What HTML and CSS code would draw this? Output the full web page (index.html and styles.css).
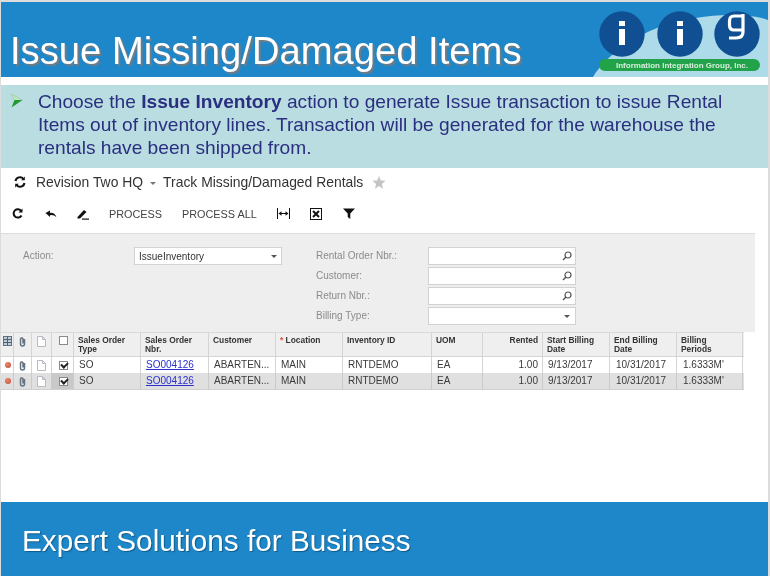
FILE: index.html
```html
<!DOCTYPE html>
<html lang="en">
<head>
<meta charset="utf-8">
<title>Issue Missing/Damaged Items</title>
<link rel="stylesheet" href="styles.css">
</head>
<body>
<div class="slide">
  <header class="banner">
    <h1 class="title">Issue Missing/Damaged Items</h1>
    <svg class="logo" width="210" height="75" viewBox="0 0 210 75">
      <path d="M35 75 C50 50 85 30 105 24 C125 17 150 13 172 13 C190 13 202 15 210 18 L210 75 Z" fill="#aedbe9"/>
      <circle cx="64" cy="32" r="22.700" fill="#0f4f92"/>
      <circle cx="122" cy="32" r="22.700" fill="#0f4f92"/>
      <circle cx="179" cy="32" r="22.700" fill="#0f4f92"/>
      <rect x="61" y="19" width="6" height="5" fill="#fff"/>
      <rect x="61" y="27" width="6" height="16" fill="#fff"/>
      <rect x="119" y="19" width="6" height="5" fill="#fff"/>
      <rect x="119" y="27" width="6" height="16" fill="#fff"/>
      <path d="M185 12 V30 Q185 36 178 36 H171 M185 14 H176 Q171.500 14 171.500 19 V23 Q171.500 28 176 28 H185" fill="none" stroke="#fff" stroke-width="3.200"/>
      <rect x="41" y="57" width="161" height="12" rx="6" fill="#22a34a"/>
      <text x="124" y="66" class="logo-text" text-anchor="middle">Information Integration Group, Inc.</text>
    </svg>
  </header>
  <section class="intro">
    <svg class="arrow" width="13" height="15" viewBox="0 0 13 15">
      <path d="M0.500 0.500 L12.500 7 L1.500 14.500 L4.500 7 Z" fill="#1f9a2e"/>
      <path d="M0.500 0.500 L12.500 7 L4.500 7 Z" fill="#bfe3c4"/>
    </svg>
    <p class="intro-text">Choose the <b>Issue Inventory</b> action to generate Issue transaction to issue Rental Items out of inventory lines. Transaction will be generated for the warehouse the rentals have been shipped from.</p>
  </section>
  <div class="app">
    <div class="crumbs">
      <svg class="ic refresh-top" width="12" height="12" viewBox="0 0 12 12"><path d="M1.500 5 A4.500 4.500 0 0 1 9.500 3 M10.500 7 A4.500 4.500 0 0 1 2.500 9" fill="none" stroke="#111" stroke-width="2"/><path d="M10.800 0.500 V4.200 H7.200 Z M1.200 11.500 V7.800 H4.800 Z" fill="#111"/></svg>
      <span class="crumb">Revision Two HQ</span>
      <span class="caret small"></span>
      <span class="crumb">Track Missing/Damaged Rentals</span>
      <svg class="star" width="14" height="13" viewBox="0 0 14 13"><path d="M7 0 L8.800 4.500 L13.600 4.800 L9.900 7.900 L11.100 12.700 L7 10 L2.900 12.700 L4.100 7.900 L0.400 4.800 L5.200 4.500 Z" fill="#c4c4c4"/></svg>
    </div>
    <div class="toolbar">
      <svg class="tool t-refresh" width="11" height="11" viewBox="0 0 11 11"><path d="M9.300 3 A4.200 4.200 0 1 0 9.500 7.500" fill="none" stroke="#111" stroke-width="2"/><path d="M10.500 0.500 V4.500 H6.500 Z" fill="#111"/></svg>
      <svg class="tool t-undo" width="12" height="8" viewBox="0 0 12 8"><path d="M3 3.500 C6 2 10 2.500 11.500 7.500 C9 4.500 6 4.700 4 5.500 Z" fill="#111"/><path d="M0.500 3 L5 0.500 L5 7 Z" fill="#111"/></svg>
      <svg class="tool t-edit" width="12" height="12" viewBox="0 0 12 12"><path d="M0.500 9 L7 2 L9.500 4 L3 10.500 L0.500 10.500 Z" fill="#111"/><rect x="5" y="10.500" width="7" height="1.200" fill="#111"/></svg>
      <span class="action">PROCESS</span>
      <span class="action">PROCESS ALL</span>
      <svg class="tool t-fit" width="13" height="11" viewBox="0 0 13 11"><path d="M0.500 0 V11 M12.500 0 V11 M2 5.500 H11" stroke="#111" fill="none"/><path d="M1.500 5.500 L4.500 3.200 V7.800 Z M11.500 5.500 L8.500 3.200 V7.800 Z" fill="#111"/></svg>
      <svg class="tool t-excel" width="12" height="12" viewBox="0 0 12 12"><rect x="0.500" y="0.500" width="11" height="11" fill="#fff" stroke="#111"/><path d="M3 3 L9 9 M9 3 L3 9" stroke="#111" stroke-width="2"/></svg>
      <svg class="tool t-filter" width="12" height="11" viewBox="0 0 12 11"><path d="M0 0.500 H12 L7.300 5.500 V11 L4.700 9 V5.500 Z" fill="#111"/></svg>
    </div>
    <div class="form">
      <div class="col-left">
        <label class="label l-action">Action:</label>
        <div class="field f-action"><span>IssueInventory</span><span class="caret"></span></div>
      </div>
      <div class="col-right">
        <label class="label">Rental Order Nbr.:</label>
        <div class="field"><svg class="search" width="10" height="10" viewBox="0 0 10 10"><circle cx="6" cy="4" r="3" fill="none" stroke="#555" stroke-width="1.200"/><path d="M4 6 L1 9" stroke="#555" stroke-width="1.500"/></svg></div>
        <label class="label">Customer:</label>
        <div class="field"><svg class="search" width="10" height="10" viewBox="0 0 10 10"><circle cx="6" cy="4" r="3" fill="none" stroke="#555" stroke-width="1.200"/><path d="M4 6 L1 9" stroke="#555" stroke-width="1.500"/></svg></div>
        <label class="label">Return Nbr.:</label>
        <div class="field"><svg class="search" width="10" height="10" viewBox="0 0 10 10"><circle cx="6" cy="4" r="3" fill="none" stroke="#555" stroke-width="1.200"/><path d="M4 6 L1 9" stroke="#555" stroke-width="1.500"/></svg></div>
        <label class="label">Billing Type:</label>
        <div class="field"><span class="caret"></span></div>
      </div>
    </div>
    <div class="grid">
      <div class="row head">
        <div class="c ico"><svg width="9" height="10" viewBox="0 0 9 10"><rect x="0.500" y="0.500" width="8" height="9" fill="#c3ccd6" stroke="#5d7188"/><path d="M0.500 3.500 H8.500 M0.500 6.500 H8.500 M4.500 0.500 V9.500" stroke="#4c6076"/></svg></div>
        <div class="c ico"><svg class="clip" width="7" height="11" viewBox="0 0 7 11"><path d="M5.500 3 V8 A2 2 0 0 1 1.500 8 V3 A1.300 1.300 0 0 1 4 3 V7.500" fill="none" stroke="#66747f" stroke-width="1.500"/></svg></div>
        <div class="c ico"><svg class="doc" width="9" height="11" viewBox="0 0 9 11"><path d="M0.500 0.500 H5.500 L8.500 3.500 V10.500 H0.500 Z M5.500 0.500 V3.500 H8.500" fill="#fff" stroke="#b4bbc2"/></svg></div>
        <div class="c ico"><span class="check"></span></div>
        <div class="c th">Sales Order Type</div>
        <div class="c th">Sales Order Nbr.</div>
        <div class="c th">Customer</div>
        <div class="c th"><span class="req">*</span> Location</div>
        <div class="c th">Inventory ID</div>
        <div class="c th">UOM</div>
        <div class="c th right">Rented</div>
        <div class="c th">Start Billing Date</div>
        <div class="c th">End Billing Date</div>
        <div class="c th">Billing Periods</div>
      </div>
      <div class="row">
        <div class="c ico"><span class="dot"></span></div>
        <div class="c ico"><svg class="clip" width="7" height="11" viewBox="0 0 7 11"><path d="M5.500 3 V8 A2 2 0 0 1 1.500 8 V3 A1.300 1.300 0 0 1 4 3 V7.500" fill="none" stroke="#66747f" stroke-width="1.500"/></svg></div>
        <div class="c ico"><svg class="doc" width="9" height="11" viewBox="0 0 9 11"><path d="M0.500 0.500 H5.500 L8.500 3.500 V10.500 H0.500 Z M5.500 0.500 V3.500 H8.500" fill="#fff" stroke="#b4bbc2"/></svg></div>
        <div class="c ico"><span class="check on"></span></div>
        <div class="c">SO</div>
        <div class="c"><a class="link" href="#">SO004126</a></div>
        <div class="c">ABARTEN...</div>
        <div class="c">MAIN</div>
        <div class="c">RNTDEMO</div>
        <div class="c">EA</div>
        <div class="c right">1.00</div>
        <div class="c">9/13/2017</div>
        <div class="c wide">10/31/2017</div>
        <div class="c wide">1.6333M'</div>
      </div>
      <div class="row alt">
        <div class="c ico"><span class="dot"></span></div>
        <div class="c ico"><svg class="clip" width="7" height="11" viewBox="0 0 7 11"><path d="M5.500 3 V8 A2 2 0 0 1 1.500 8 V3 A1.300 1.300 0 0 1 4 3 V7.500" fill="none" stroke="#66747f" stroke-width="1.500"/></svg></div>
        <div class="c ico"><svg class="doc" width="9" height="11" viewBox="0 0 9 11"><path d="M0.500 0.500 H5.500 L8.500 3.500 V10.500 H0.500 Z M5.500 0.500 V3.500 H8.500" fill="#fff" stroke="#b4bbc2"/></svg></div>
        <div class="c ico sel"><span class="check on"></span></div>
        <div class="c">SO</div>
        <div class="c"><a class="link" href="#">SO004126</a></div>
        <div class="c">ABARTEN...</div>
        <div class="c">MAIN</div>
        <div class="c">RNTDEMO</div>
        <div class="c">EA</div>
        <div class="c right">1.00</div>
        <div class="c">9/13/2017</div>
        <div class="c wide">10/31/2017</div>
        <div class="c wide">1.6333M'</div>
      </div>
    </div>
  </div>
  <footer class="footer">Expert Solutions for Business</footer>
</div>
</body>
</html>
```
FILE: styles.css
```css
* { box-sizing: border-box; }
html, body { margin: 0; padding: 0; height: 576px; overflow: hidden; }
body { background: #dcdcdc; font-family: "Liberation Sans", Arial, sans-serif; }

.slide {
  margin: 2px 2px 0 1px;
  height: 574px;
  background: #fff;
  display: flex;
  flex-direction: column;
  filter: blur(0.35px);
}

.banner {
  position: relative;
  height: 75px;
  background: #1e87c9;
  flex: none;
}
.title {
  margin: 0;
  padding: 27px 0 0 9px;
  font-size: 38.2px;
  line-height: 43px;
  font-weight: 400;
  color: #fff;
  white-space: nowrap;
  text-shadow: 2px 2px 1px #6f7c86;
}
.logo { position: absolute; right: 0; top: 0; }
.logo-text { font-size: 8px; font-weight: 700; fill: #d8eedd; font-family: "Liberation Sans", sans-serif; }

.intro {
  margin-top: 8px;
  height: 83px;
  background: #b9dde1;
  display: flex;
  flex: none;
  padding: 5px 30px 0 9px;
}
.arrow { flex: none; margin-top: 3px; }
.intro-text {
  margin: 0 0 0 15px;
  font-size: 19.15px;
  line-height: 23px;
  color: #2b2f80;
}

.app { flex: 1; display: flex; flex-direction: column; }
.crumbs {
  display: flex;
  align-items: center;
  height: 28px;
  padding-left: 13px;
  font-size: 13.9px;
  color: #333;
}
.refresh-top { margin-right: 10px; }
.crumb { white-space: nowrap; }
.star { margin-left: 9px; }
.caret {
  display: inline-block;
  width: 0; height: 0;
  border-left: 3px solid transparent;
  border-right: 3px solid transparent;
  border-top: 3px solid #555;
}
.caret.small { margin: 2px 7px 0 7px; border-top-color: #777; }

.toolbar {
  display: flex;
  align-items: center;
  height: 37px;
  padding: 0 0 2px 11px;
  font-size: 10.85px;
  color: #444;
}
.tool { flex: none; }
.t-undo { margin-left: 22px; }
.t-edit { margin-left: 20px; }
.action { margin-left: 20px; white-space: nowrap; }
.t-fit { margin-left: 20px; }
.t-excel { margin-left: 20px; }
.t-filter { margin-left: 21px; }

.form {
  width: 754px;
  height: 99px;
  background: #eeeeee;
  border-top: 1px solid #dcdcdc;
  display: flex;
  padding: 13px 0 0 22px;
  font-size: 10px;
}
.label { color: #8b8b8b; line-height: 18px; }
.field {
  height: 18px;
  background: #fff;
  border: 1px solid #d2d2d2;
  display: flex;
  align-items: center;
  justify-content: flex-end;
  padding: 0 3px;
  color: #333;
}
.field .caret { margin-right: 2px; }
.col-left { display: grid; grid-template-columns: 111px 148px; align-self: start; }
.f-action { justify-content: space-between; padding-right: 2px; padding-left: 4px; }
.col-right {
  margin-left: 34px;
  display: grid;
  grid-template-columns: 112px 148px;
  row-gap: 2px;
  align-self: start;
}

.grid { width: 743px; border-top: 1px solid #d8d8d8; border-bottom: 1px solid #d0d0d0; }
.row {
  display: grid;
  grid-template-columns: 13px 18px 20px 22px 67px 68px 67px 67px 89px 51px 60px 67px 67px 66px;
  height: 16px;
  font-size: 10px;
  color: #3a3a3a;
  background: #fff;
}
.row.head { height: 24px; background: #efefef; border-bottom: 1px solid #d4d4d4; }
.row.alt { background: #e0e0e0; }
.c {
  border-right: 1px solid #d4d4d4;
  padding: 0 4px 0 5px;
  line-height: 16px;
  white-space: nowrap;
  overflow: hidden;
}
.c.wide { padding-left: 6px; }
.row.alt .c { border-right-color: #cacaca; }
.c.right { text-align: right; padding-right: 4px; }
.c.th {
  white-space: normal;
  font-size: 8.400px;
  font-weight: 700;
  line-height: 9px;
  padding: 3px 4px 0 4px;
  color: #333;
}
.c.ico { padding: 0; display: flex; align-items: center; justify-content: center; }
.c.sel { background: #c9c9c9; }
.row.head .c.ico { align-items: flex-start; padding-top: 3px; }
.req { color: #d9502e; }
.link { color: #2a2fd0; }
.dot {
  width: 6px; height: 6px;
  margin-left: 1px;
  border-radius: 50%;
  background: radial-gradient(circle at 40% 35%, #e98a6e, #c4472f);
}
.check {
  display: block;
  width: 9px; height: 9px;
  margin-left: 1px;
  background: #fff;
  border: 1px solid #8a8a8a;
  position: relative;
}
.check.on::after {
  content: "";
  position: absolute;
  left: 1px; top: 0;
  width: 5px; height: 3px;
  border-left: 2px solid #222;
  border-bottom: 2px solid #222;
  transform: rotate(-45deg);
}

.footer {
  height: 74px;
  flex: none;
  background: #1e87c9;
  color: #fff;
  font-size: 29.75px;
  line-height: 78px;
  padding-left: 21px;
  text-shadow: 1px 1px 1px #0f5a88;
}
```
